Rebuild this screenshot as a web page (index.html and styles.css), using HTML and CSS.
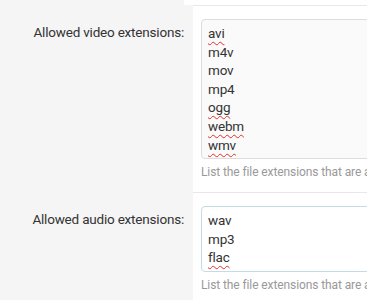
FILE: index.html
```html
<!DOCTYPE html>
<html lang="en">
<head>
    <meta charset="UTF-8">
    <title>Media settings</title>
    <link rel="stylesheet" href="styles.css">
</head>
<body>
    <div class="form">
        <!-- tail of the previous setting -->
        <div class="form-row form-row-prev">
            <div class="form-label"></div>
            <div class="form-field"></div>
        </div>

        <div class="form-row">
            <div class="form-label">Allowed video extensions:</div>
            <div class="form-field">
                <div class="textbox">
                    <span class="typo">avi</span><br>
                    m4v<br>
                    mov<br>
                    mp4<br>
                    <span class="typo">ogg</span><br>
                    <span class="typo">webm</span><br>
                    <span class="typo">wmv</span>
                </div>
                <p class="help">List the file extensions that are allowed for video uploads.</p>
            </div>
        </div>

        <div class="form-row">
            <div class="form-label">Allowed audio extensions:</div>
            <div class="form-field">
                <div class="textbox textbox-focus">
                    wav<br>
                    mp3<br>
                    <span class="typo">flac</span>
                </div>
                <p class="help">List the file extensions that are allowed for audio uploads.</p>
            </div>
        </div>
    </div>
</body>
</html>
```

FILE: styles.css
```css
body {
    margin: 0;
    background: #fff;
    font-family: Roboto, "Noto Sans", sans-serif;
    color: #333;
    overflow: hidden;
}

.form {
    width: 620px;
}

.form-row {
    display: flex;
}

.form-label {
    width: 184px;
    flex-shrink: 0;
    background: #f5f5f5;
    text-align: right;
    padding: 18px 9px 0 0;
    font-size: 13.5px;
    letter-spacing: -0.2px;
    line-height: 19px;
    white-space: nowrap;
}

.form-field {
    flex: 1;
    border-top: 1px solid #e8e8e8;
    padding: 13px 0 11px 8px;
}

.form-row-prev .form-field {
    border-top: none;
    padding: 0;
    height: 5px;
}

.form-row-prev .form-label {
    padding: 0;
}

.textbox {
    border: 1px solid #ddd;
    border-radius: 4px;
    background: #fafafa;
    padding: 4px 6px;
    font-size: 13.5px;
    letter-spacing: -0.2px;
    line-height: 18.6px;
    color: #333;
}

.textbox-focus {
    background: #fff;
    border-color: #c4dbe6;
}

.typo {
    text-decoration: underline wavy #e0302a;
    text-decoration-thickness: 1px;
    text-underline-offset: 3px;
}

.help {
    margin: 5px 0 0 0;
    font-size: 12px;
    letter-spacing: -0.1px;
    line-height: 17px;
    color: #999;
    white-space: nowrap;
}
```
